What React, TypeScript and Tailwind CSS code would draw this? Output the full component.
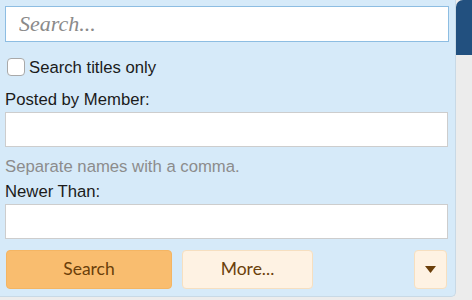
import {useState} from "react";

export default function App() {
  const [titlesOnly, setTitlesOnly] = useState(false);

  return (
    <div className="w-[472px] h-[300px] bg-[#ececec] flex overflow-hidden">
      <div className="w-[456px] h-[297px] shrink-0 bg-[#d6eaf9] rounded-br-[5px] border-r border-b border-[#c8d9e6] pl-[5px] pr-[7px] pt-[6px] font-['Liberation_Sans',Arial,sans-serif] text-[16.7px] text-[#1b1b1b]">
        <input
          type="text"
          placeholder="Search..."
          className="block w-[444px] h-[36px] bg-white border-[1.5px] border-[#8dbde2] px-[13px] font-['Liberation_Serif',serif] italic text-[22px] placeholder:text-[#8a8a8a] outline-none"
        />

        <label className="mt-[16px] flex items-center h-[18px] pl-[2px]">
          <span
            className="w-[18px] h-[18px] rounded-[4px] bg-white border border-[#a9a9a9] shrink-0"
            onClick={() => setTitlesOnly(!titlesOnly)}
          />
          <span className="ml-[4px] leading-[20px] translate-y-[1px]">Search titles only</span>
        </label>

        <div className="mt-[14px] leading-[20px]">Posted by Member:</div>
        <input
          type="text"
          className="mt-[2px] block w-[443px] h-[35px] bg-white border-[1.5px] border-[#cdcdcd] outline-none"
        />
        <div className="mt-[10px] leading-[20px] text-[#8c8c8c]">Separate names with a comma.</div>

        <div className="mt-[5px] leading-[20px]">Newer Than:</div>
        <input
          type="text"
          className="mt-[2px] block w-[443px] h-[35px] bg-white border-[1.5px] border-[#cdcdcd] outline-none"
        />

        <div className="mt-[11px] flex items-center font-['Lato','Open_Sans',sans-serif] text-[17.5px] text-[#6b3f0a]">
          <button className="w-[166px] h-[39px] ml-[1px] rounded-[4px] bg-[#f9bd6f] border border-[#f4b563]">
            Search
          </button>
          <button className="w-[131px] h-[39px] ml-[10px] rounded-[4px] bg-[#fef2e3] border border-[#f6dfc0]">
            More...
          </button>
          <button className="w-[33px] h-[39px] ml-auto mr-[1px] rounded-[4px] bg-[#fef2e3] border border-[#f6dfc0] flex items-center justify-center">
            <svg width="11" height="7" viewBox="0 0 11 7">
              <path d="M0 0 H11 L5.5 7 Z" fill="#6b3f0a" />
            </svg>
          </button>
        </div>
      </div>

      <div className="flex-1 flex flex-col">
        <div className="h-[55px] bg-[#22507f] rounded-tl-[7px]" />
      </div>
    </div>
  );
}
